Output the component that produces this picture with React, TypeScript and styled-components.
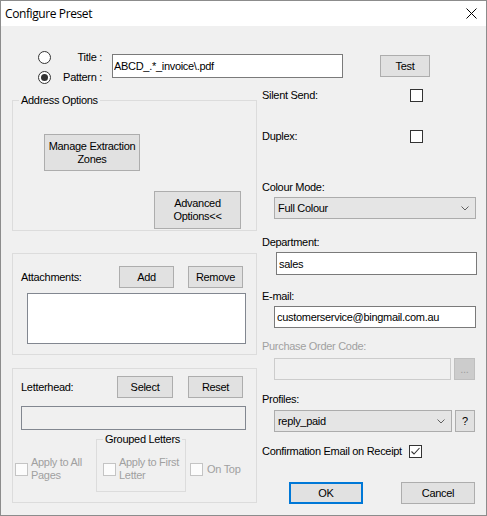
import { styled, createGlobalStyle } from 'styled-components';

const GlobalStyle = createGlobalStyle`
  * {
    box-sizing: border-box;
  }

  html,
  body {
    margin: 0;
    padding: 0;
    background: #f0f0f0;
  }

  body {
    font-family: 'Liberation Sans', Arial, sans-serif;
    font-size: 11px;
    line-height: 13px;
    letter-spacing: -0.3px;
    color: #000;
  }
`;

const Chevron = () => (
  <svg width="8" height="5" viewBox="0 0 8 5">
    <path d="M0.5 0.5 L4 4 L7.5 0.5" fill="none" stroke="#606060" strokeWidth="1" />
  </svg>
);

const CheckBox = ({ checked, disabled }: { checked?: boolean; disabled?: boolean }) => (
  <St.Box $disabled={disabled}>
    {checked && (
      <svg width="11" height="11" viewBox="0 0 11 11">
        <path d="M1.5 5.5 L4 8 L9.5 2" fill="none" stroke="#333" strokeWidth="1.1" />
      </svg>
    )}
  </St.Box>
);

const Combo = ({ value, width }: { value: string; width: number }) => (
  <St.Combo $w={width}>
    <span>{value}</span>
    <Chevron />
  </St.Combo>
);

const App = () => {
  return (
    <>
      <GlobalStyle />
      <St.Window>
        <St.TitleBar>
          <St.Title>Configure Preset</St.Title>
          <svg width="11" height="11" viewBox="0 0 11 11">
            <path d="M0.5 0.5 L10.5 10.5 M10.5 0.5 L0.5 10.5" stroke="#000" strokeWidth="1" />
          </svg>
        </St.TitleBar>

        <St.Body>
          <St.TopRow>
            <St.RadioList>
              <St.RadioRow>
                <St.Radio />
                <St.RadioLabel>Title :</St.RadioLabel>
              </St.RadioRow>
              <St.RadioRow>
                <St.Radio $checked />
                <St.RadioLabel>Pattern :</St.RadioLabel>
              </St.RadioRow>
            </St.RadioList>
            <St.PatternInput defaultValue="ABCD_.*_invoice\.pdf" />
            <St.Button $w={50} $h={22} $mt={8} $ml={37}>
              Test
            </St.Button>
          </St.TopRow>

          <St.Columns>
            <St.LeftCol>
              <St.AddressGroup>
                <St.Legend $ml={6}>Address Options</St.Legend>
                <St.Button $w={96} $h={37} $mt={27} $ml={31}>
                  Manage Extraction Zones
                </St.Button>
                <St.Button $w={87} $h={38} $mt={20} $ml={141}>
                  Advanced
                  <br />
                  Options&lt;&lt;
                </St.Button>
              </St.AddressGroup>

              <St.AttachPanel>
                <St.PanelHeader $gap={14}>
                  <St.HeaderLabel>Attachments:</St.HeaderLabel>
                  <St.Button $w={55} $h={22}>
                    Add
                  </St.Button>
                  <St.Button $w={55} $h={22}>
                    Remove
                  </St.Button>
                </St.PanelHeader>
                <St.ListBox />
              </St.AttachPanel>

              <St.LetterPanel>
                <St.PanelHeader $gap={15} $ml={6}>
                  <St.HeaderLabel>Letterhead:</St.HeaderLabel>
                  <St.Button $w={56} $h={22}>
                    Select
                  </St.Button>
                  <St.Button $w={55} $h={22}>
                    Reset
                  </St.Button>
                </St.PanelHeader>
                <St.LetterField />
                <St.OptionsRow>
                  <St.Option $w={81} $mt={23}>
                    <CheckBox disabled />
                    <St.OptionLabel $w={64}>Apply to All Pages</St.OptionLabel>
                  </St.Option>
                  <St.GroupedSet>
                    <St.Legend $ml={0}>Grouped Letters</St.Legend>
                    <St.Option>
                      <CheckBox disabled />
                      <St.OptionLabel $w={66}>Apply to First Letter</St.OptionLabel>
                    </St.Option>
                  </St.GroupedSet>
                  <St.Option $mt={23} $ml={4} $gap={4}>
                    <CheckBox disabled />
                    <St.OptionLabel>On Top</St.OptionLabel>
                  </St.Option>
                </St.OptionsRow>
              </St.LetterPanel>
            </St.LeftCol>

            <St.RightCol>
              <St.CheckRow $lw={148}>
                <span>Silent Send:</span>
                <CheckBox />
              </St.CheckRow>
              <St.CheckRow $lw={148} $mt={27}>
                <span>Duplex:</span>
                <CheckBox />
              </St.CheckRow>

              <St.FieldLabel $mt={38}>Colour Mode:</St.FieldLabel>
              <St.FieldRow $mt={3}>
                <Combo value="Full Colour" width={202} />
              </St.FieldRow>

              <St.FieldLabel $mt={17}>Department:</St.FieldLabel>
              <St.FieldRow $mt={3} $ml={14}>
                <St.TextBox $w={201} $h={23} defaultValue="sales" />
              </St.FieldRow>

              <St.FieldLabel $mt={15}>E-mail:</St.FieldLabel>
              <St.FieldRow $mt={3}>
                <St.TextBox $w={202} $h={22} defaultValue="customerservice@bingmail.com.au" />
              </St.FieldRow>

              <St.FieldLabel $mt={12} $disabled>
                Purchase Order Code:
              </St.FieldLabel>
              <St.FieldRow $mt={5}>
                <St.TextBox $w={177} $h={22} disabled />
                <St.Button $w={21} $h={22} $disabled>
                  ...
                </St.Button>
              </St.FieldRow>

              <St.FieldLabel $mt={13}>Profiles:</St.FieldLabel>
              <St.FieldRow $mt={4}>
                <Combo value="reply_paid" width={178} />
                <St.Button $w={20} $h={22}>
                  ?
                </St.Button>
              </St.FieldRow>

              <St.CheckRow $lw={147} $mt={12}>
                <span>Confirmation Email on Receipt</span>
                <CheckBox checked />
              </St.CheckRow>

              <St.ButtonRow>
                <St.Button $w={74} $h={22} $primary>
                  OK
                </St.Button>
                <St.Button $w={74} $h={22}>
                  Cancel
                </St.Button>
              </St.ButtonRow>
            </St.RightCol>
          </St.Columns>
        </St.Body>
      </St.Window>
    </>
  );
};

export default App;

const St = {
  Window: styled.div`
    display: flex;
    flex-direction: column;
    width: 487px;
    height: 516px;

    border: 1px solid #8c8c8c;
    background: #f0f0f0;
    overflow: hidden;
  `,

  TitleBar: styled.div`
    display: flex;
    align-items: center;
    justify-content: space-between;
    height: 25px;
    padding: 0 9px 0 4px;

    background: #fff;
  `,

  Title: styled.span`
    font-family: 'Open Sans', 'Noto Sans', sans-serif;
    font-size: 12px;
    letter-spacing: -0.4px;
  `,

  Body: styled.div`
    display: flex;
    flex-direction: column;
    padding-top: 21px;
  `,

  TopRow: styled.div`
    display: flex;
    align-items: flex-start;
    padding-left: 37px;
  `,

  RadioList: styled.div`
    display: flex;
    flex-direction: column;
  `,

  RadioRow: styled.div`
    display: flex;
    align-items: center;
    height: 20px;
  `,

  Radio: styled.span<{ $checked?: boolean }>`
    position: relative;
    width: 13px;
    height: 13px;

    border: 1px solid #333;
    border-radius: 50%;
    background: #fff;

    &::after {
      content: '';
      display: ${({ $checked }) => ($checked ? 'block' : 'none')};
      position: absolute;
      left: 2px;
      top: 2px;
      width: 7px;
      height: 7px;
      border-radius: 50%;
      background: #333;
    }
  `,

  RadioLabel: styled.span`
    width: 51px;
    text-align: right;
  `,

  PatternInput: styled.input`
    width: 231px;
    height: 24px;
    margin: 7px 0 0 10px;
    padding: 0 1px;

    border: 1px solid #7a7a7a;
    background: #fff;
    outline: none;

    font: inherit;
    letter-spacing: inherit;
  `,

  Button: styled.button<{
    $w: number;
    $h: number;
    $mt?: number;
    $ml?: number;
    $primary?: boolean;
    $disabled?: boolean;
  }>`
    display: block;
    flex-shrink: 0;
    width: ${({ $w }) => $w}px;
    height: ${({ $h }) => $h}px;
    margin: ${({ $mt = 0, $ml = 0 }) => `${$mt}px 0 0 ${$ml}px`};
    padding: 0 2px;

    border: ${({ $primary, $disabled }) =>
      $primary ? '2px solid #0078d7' : $disabled ? '1px solid #bfbfbf' : '1px solid #adadad'};
    background: ${({ $disabled }) => ($disabled ? '#cccccc' : '#e1e1e1')};
    color: ${({ $disabled }) => ($disabled ? '#a0a0a0' : '#000')};

    font: inherit;
    letter-spacing: inherit;
    line-height: 13px;
  `,

  Columns: styled.div`
    display: flex;
    gap: 5px;
    margin-top: 1px;
    padding-left: 11px;
  `,

  LeftCol: styled.div`
    display: flex;
    flex-direction: column;
    width: 245px;
    padding-top: 6px;
  `,

  RightCol: styled.div`
    display: flex;
    flex-direction: column;
    width: 215px;
  `,

  Legend: styled.legend<{ $ml: number }>`
    margin-left: ${({ $ml }) => $ml}px;
    padding: 0 2px;
    line-height: 13px;
    white-space: nowrap;
  `,

  AddressGroup: styled.fieldset`
    display: flex;
    flex-direction: column;
    align-items: flex-start;
    min-width: 0;
    margin: 0;
    padding: 0 0 1px 0;

    border: 1px solid #dcdcdc;
  `,

  AttachPanel: styled.div`
    display: flex;
    flex-direction: column;
    margin-top: 22px;
    padding: 12px 13px 10px 8px;

    border: 1px solid #dcdcdc;
  `,

  LetterPanel: styled.div`
    display: flex;
    flex-direction: column;
    margin-top: 13px;
    padding: 7px 13px 10px 2px;

    border: 1px solid #dcdcdc;
  `,

  PanelHeader: styled.div<{ $gap: number; $ml?: number }>`
    display: flex;
    align-items: center;
    gap: ${({ $gap }) => $gap}px;
    height: 22px;
    margin-left: ${({ $ml = 0 }) => $ml}px;
  `,

  HeaderLabel: styled.span`
    flex: 1;
  `,

  ListBox: styled.div`
    width: 219px;
    height: 51px;
    margin: 5px 0 0 6px;

    border: 1px solid #828790;
    background: #fff;
  `,

  LetterField: styled.div`
    width: 225px;
    height: 24px;
    margin: 8px 0 0 6px;

    border: 1px solid #828790;
    background: #f0f0f0;
  `,

  OptionsRow: styled.div`
    display: flex;
    align-items: flex-start;
    margin-top: 3px;
  `,

  Option: styled.div<{ $w?: number; $mt?: number; $ml?: number; $gap?: number }>`
    display: flex;
    align-items: center;
    gap: ${({ $gap = 3 }) => $gap}px;
    width: ${({ $w }) => ($w ? `${$w}px` : 'auto')};
    height: 26px;
    margin: ${({ $mt = 0, $ml = 0 }) => `${$mt}px 0 0 ${$ml}px`};

    color: #a0a0a0;
  `,

  OptionLabel: styled.span<{ $w?: number }>`
    width: ${({ $w }) => ($w ? `${$w}px` : 'auto')};
  `,

  GroupedSet: styled.fieldset`
    width: 90px;
    min-width: 0;
    margin: 0;
    padding: 10px 0 9px 6px;

    border: 1px solid #dcdcdc;
  `,

  Box: styled.span<{ $disabled?: boolean }>`
    display: flex;
    align-items: center;
    justify-content: center;
    flex-shrink: 0;
    width: 13px;
    height: 13px;

    border: 1px solid ${({ $disabled }) => ($disabled ? '#c4c4c4' : '#333')};
    background: ${({ $disabled }) => ($disabled ? '#fcfcfc' : '#fff')};
  `,

  CheckRow: styled.div<{ $lw: number; $mt?: number }>`
    display: flex;
    align-items: center;
    height: 14px;
    margin-top: ${({ $mt = 0 }) => $mt}px;

    & > span:first-child {
      width: ${({ $lw }) => $lw}px;
    }
  `,

  FieldLabel: styled.div<{ $mt: number; $disabled?: boolean }>`
    margin-top: ${({ $mt }) => $mt}px;
    line-height: 13px;
    color: ${({ $disabled }) => ($disabled ? '#a0a0a0' : '#000')};
  `,

  FieldRow: styled.div<{ $mt: number; $ml?: number }>`
    display: flex;
    gap: 3px;
    margin: ${({ $mt, $ml = 12 }) => `${$mt}px 0 0 ${$ml}px`};
  `,

  TextBox: styled.input<{ $w: number; $h: number }>`
    width: ${({ $w }) => $w}px;
    height: ${({ $h }) => $h}px;
    padding: 0 2px;

    border: 1px solid #7a7a7a;
    background: #fff;
    outline: none;

    font: inherit;
    letter-spacing: inherit;
    color: #000;

    &:disabled {
      border-color: #cccccc;
      background: #f0f0f0;
    }
  `,

  Combo: styled.div<{ $w: number }>`
    display: flex;
    align-items: center;
    justify-content: space-between;
    width: ${({ $w }) => $w}px;
    height: 22px;
    padding: 0 6px 0 3px;

    border: 1px solid #acacac;
    background: #e5e5e5;
  `,

  ButtonRow: styled.div`
    display: flex;
    gap: 38px;
    margin-top: 24px;
    padding-left: 27px;
  `,
};
